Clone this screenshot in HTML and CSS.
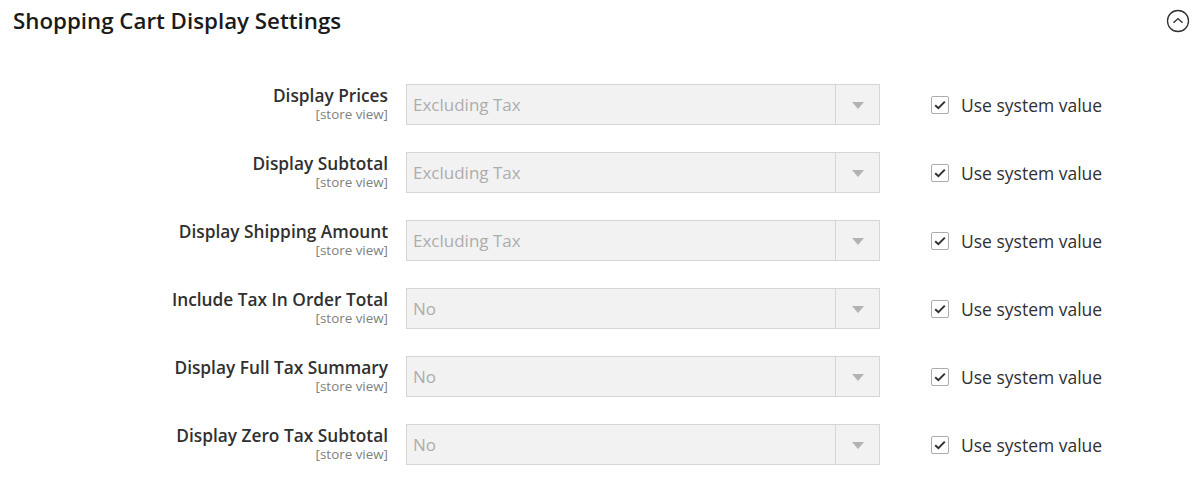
FILE: index.html
```html
<!DOCTYPE html>
<html>
<head>
<meta charset="utf-8">
<link rel="stylesheet" href="styles.css">
</head>
<body>
<div class="section">
  <div class="section-head">
    <h2 class="title">Shopping Cart Display Settings</h2>
    <span class="collapse">
      <svg width="24" height="24" viewBox="0 0 24 24"><circle cx="12" cy="12" r="10.5" fill="none" stroke="#303030" stroke-width="1.3"/><path d="M7.5 13.8 L12 9.6 L16.5 13.8" fill="none" stroke="#303030" stroke-width="1.4"/></svg>
    </span>
  </div>
  <div class="rows">
    <div class="row">
      <div class="label"><span class="name">Display Prices</span><span class="scope">[store view]</span></div>
      <div class="select"><span class="value">Excluding Tax</span><span class="arrow"></span></div>
      <label class="use"><span class="check"><svg width="12" height="10" viewBox="0 0 12 10"><path d="M1.2 5.2 L4.4 8.2 L10.8 1.6" fill="none" stroke="#303030" stroke-width="2"/></svg></span>Use system value</label>
    </div>
    <div class="row">
      <div class="label"><span class="name">Display Subtotal</span><span class="scope">[store view]</span></div>
      <div class="select"><span class="value">Excluding Tax</span><span class="arrow"></span></div>
      <label class="use"><span class="check"><svg width="12" height="10" viewBox="0 0 12 10"><path d="M1.2 5.2 L4.4 8.2 L10.8 1.6" fill="none" stroke="#303030" stroke-width="2"/></svg></span>Use system value</label>
    </div>
    <div class="row">
      <div class="label"><span class="name">Display Shipping Amount</span><span class="scope">[store view]</span></div>
      <div class="select"><span class="value">Excluding Tax</span><span class="arrow"></span></div>
      <label class="use"><span class="check"><svg width="12" height="10" viewBox="0 0 12 10"><path d="M1.2 5.2 L4.4 8.2 L10.8 1.6" fill="none" stroke="#303030" stroke-width="2"/></svg></span>Use system value</label>
    </div>
    <div class="row">
      <div class="label"><span class="name">Include Tax In Order Total</span><span class="scope">[store view]</span></div>
      <div class="select"><span class="value">No</span><span class="arrow"></span></div>
      <label class="use"><span class="check"><svg width="12" height="10" viewBox="0 0 12 10"><path d="M1.2 5.2 L4.4 8.2 L10.8 1.6" fill="none" stroke="#303030" stroke-width="2"/></svg></span>Use system value</label>
    </div>
    <div class="row">
      <div class="label"><span class="name">Display Full Tax Summary</span><span class="scope">[store view]</span></div>
      <div class="select"><span class="value">No</span><span class="arrow"></span></div>
      <label class="use"><span class="check"><svg width="12" height="10" viewBox="0 0 12 10"><path d="M1.2 5.2 L4.4 8.2 L10.8 1.6" fill="none" stroke="#303030" stroke-width="2"/></svg></span>Use system value</label>
    </div>
    <div class="row">
      <div class="label"><span class="name">Display Zero Tax Subtotal</span><span class="scope">[store view]</span></div>
      <div class="select"><span class="value">No</span><span class="arrow"></span></div>
      <label class="use"><span class="check"><svg width="12" height="10" viewBox="0 0 12 10"><path d="M1.2 5.2 L4.4 8.2 L10.8 1.6" fill="none" stroke="#303030" stroke-width="2"/></svg></span>Use system value</label>
    </div>
  </div>
</div>
</body>
</html>
```
FILE: styles.css
```css
html, body {
  margin: 0;
  padding: 0;
  background: #ffffff;
}
body {
  font-family: "Open Sans", "Liberation Sans", sans-serif;
  color: #303030;
}
.section {
  width: 1202px;
}
.section-head {
  display: flex;
  align-items: center;
  justify-content: space-between;
  height: 42px;
  padding: 0 12px 0 13px;
}
.title {
  margin: 0;
  font-size: 22.3px;
  font-weight: 600;
  color: #1a1a1a;
  line-height: 28px;
}
.collapse {
  display: flex;
  width: 24px;
  height: 24px;
}
.rows {
  display: flex;
  flex-direction: column;
  gap: 27px;
  padding-top: 42px;
}
.row {
  display: grid;
  grid-template-columns: 388px 474px auto;
  column-gap: 18px;
  align-items: start;
}
.label {
  display: flex;
  flex-direction: column;
  align-items: flex-end;
  padding-top: 0;
}
.name {
  font-size: 17.3px;
  font-weight: 600;
  line-height: 23px;
  color: #303030;
}
.scope {
  font-size: 13.4px;
  line-height: 15px;
  color: #808080;
}
.select {
  display: flex;
  align-items: center;
  height: 39px;
  border: 1px solid #d6d6d6;
  background: #f2f2f2;
  position: relative;
}
.value {
  flex: 1;
  padding-left: 6px;
  font-size: 17px;
  color: #adadad;
}
.arrow {
  width: 43px;
  height: 39px;
  border-left: 1px solid #d6d6d6;
  display: flex;
  align-items: center;
  justify-content: center;
}
.arrow::after {
  content: "";
  border-left: 6px solid transparent;
  border-right: 6px solid transparent;
  border-top: 7px solid #b3b3b3;
  margin-top: 1px;
}
.use {
  display: flex;
  align-items: center;
  height: 41px;
  margin-left: 33px;
  font-size: 17.5px;
  color: #303030;
}
.check {
  width: 16px;
  height: 16px;
  border: 1px solid #adadad;
  border-radius: 2px;
  background: #fff;
  display: flex;
  align-items: center;
  justify-content: center;
  margin-right: 12px;
}
```
